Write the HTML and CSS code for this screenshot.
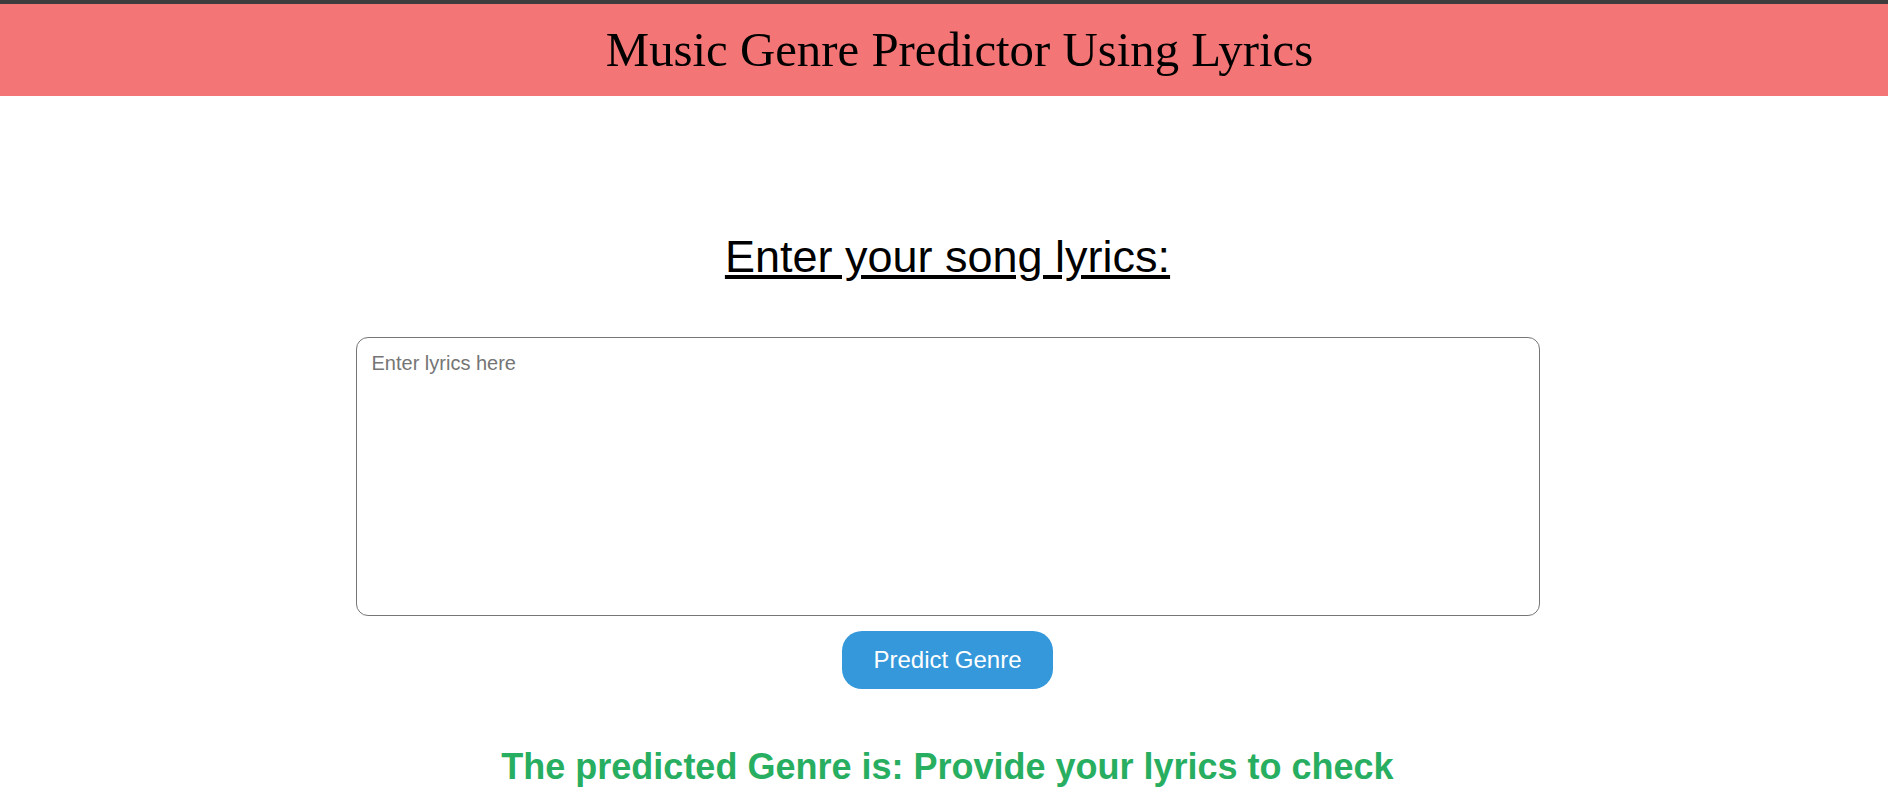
FILE: index.html
```html
<!DOCTYPE html>
<html lang="en">
<head>
<meta charset="utf-8">
<title>Music Genre Predictor Using Lyrics</title>
<link rel="stylesheet" href="styles.css">
</head>
<body>
<header class="site-header">
  <h1 class="site-title">Music Genre Predictor Using Lyrics</h1>
</header>
<main class="main">
  <h2 class="prompt">Enter your song lyrics:</h2>
  <form class="lyrics-form">
    <textarea class="lyrics-input" placeholder="Enter lyrics here"></textarea>
    <button type="button" class="predict-btn">Predict Genre</button>
  </form>
  <h2 class="result">The predicted Genre is: Provide your lyrics to check</h2>
</main>
</body>
</html>
```

FILE: styles.css
```css
html, body {
  margin: 0;
  padding: 0;
  background: #ffffff;
}

body {
  font-family: "Liberation Sans", Arial, sans-serif;
  color: #000000;
}

.site-header {
  border-top: 4px solid #3d3d3d;
  background: #f37575;
  height: 92px;
  display: flex;
  align-items: center;
  justify-content: center;
  padding-left: 31px;
}

.site-title {
  margin: 0;
  font-family: "Liberation Serif", "Times New Roman", serif;
  font-weight: normal;
  font-size: 48.8px;
  line-height: normal;
}

.main {
  display: flex;
  flex-direction: column;
  align-items: center;
  padding-top: 135px;
  padding-left: 7px;
}

.prompt {
  margin: 0;
  font-size: 45px;
  font-weight: normal;
  line-height: normal;
  text-decoration: underline;
}

.lyrics-form {
  display: flex;
  flex-direction: column;
  align-items: center;
  margin-top: 54px;
}

.lyrics-input {
  box-sizing: border-box;
  width: 1184px;
  height: 279px;
  border: 1px solid #767676;
  border-radius: 12px;
  padding: 14px 15px;
  font-family: "Liberation Sans", Arial, sans-serif;
  font-size: 20px;
  resize: none;
  outline: none;
  margin: 0;
}

.lyrics-input::placeholder {
  color: #757575;
}

.predict-btn {
  margin-top: 15px;
  background: #3498db;
  color: #ffffff;
  border: none;
  border-radius: 20px;
  padding: 15px 31px;
  font-family: "Liberation Sans", Arial, sans-serif;
  font-size: 24px;
  line-height: normal;
  cursor: pointer;
}

.result {
  margin: 57px 0 0 0;
  font-size: 36px;
  font-weight: bold;
  line-height: normal;
  color: #27ae60;
}
```
